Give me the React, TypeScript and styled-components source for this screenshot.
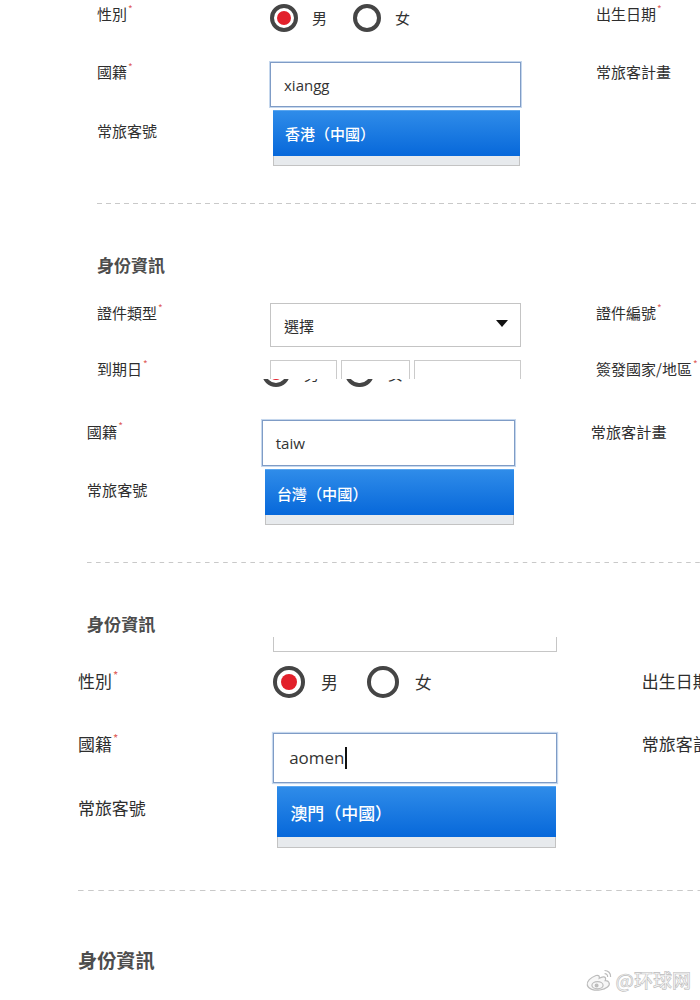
import React from "react";
import styled, { createGlobalStyle } from "styled-components";

const CJK = `"Noto Sans CJK TC", "Noto Sans CJK SC", "Noto Sans", sans-serif`;

const GlobalStyle = createGlobalStyle`
  html, body { margin: 0; padding: 0; background: #ffffff; }
  body { width: 700px; height: 1000px; overflow: hidden; font-family: ${CJK}; }
`;

const Page = styled.main`
  position: relative;
  width: 700px;
  height: 1000px;
  display: flex;
  flex-direction: column;
  overflow: hidden;
  background: #ffffff;
`;

const Shot = styled.section<{ $h: number }>`
  flex: none;
  height: ${(p) => p.$h}px;
  overflow: hidden;
`;

const Form = styled.div<{ $zoom: number; $left: number; $shift: number }>`
  zoom: ${(p) => p.$zoom};
  width: 760px;
  padding-left: ${(p) => p.$left}px;
  margin-top: ${(p) => p.$shift}px;
  display: flex;
  flex-direction: column;
`;

const Row = styled.div<{ $h: number; $top?: number }>`
  display: grid;
  grid-template-columns: 173px 251px 75px 1fr;
  align-items: start;
  height: ${(p) => p.$h}px;
  margin-top: ${(p) => p.$top ?? 0}px;
`;

const Label = styled.div<{ $pad?: number }>`
  padding-top: ${(p) => p.$pad ?? 0}px;
  font-size: 15px;
  line-height: 20px;
  color: #2e2e2e;
  white-space: nowrap;
`;

const Star = styled.span`
  color: #e0605a;
  font-size: 10px;
  line-height: 10px;
  vertical-align: top;
  margin-left: 1px;
`;

const Field = styled.div`
  position: relative;
`;

const TextBox = styled.div<{ $h: number; $focus?: boolean }>`
  box-sizing: border-box;
  height: ${(p) => p.$h}px;
  padding: 0 13px;
  display: flex;
  align-items: center;
  background: #fff;
  border: 1px solid ${(p) => (p.$focus ? "#7f9cc6" : "#c6c6c6")};
  box-shadow: ${(p) => (p.$focus ? "0 0 0 1px rgba(150, 182, 222, 0.55)" : "none")};
  font-family: "Open Sans", "Noto Sans", ${CJK};
  font-size: 15px;
  color: #333;
`;

const Caret = styled.span`
  display: inline-block;
  width: 1px;
  height: 19px;
  margin-left: 1px;
  background: #111;
`;

const SelectBox = styled.div`
  box-sizing: border-box;
  height: 44px;
  padding: 0 12px 0 13px;
  display: flex;
  align-items: center;
  justify-content: space-between;
  border: 1px solid #c4c4c4;
  background: #fff;
  font-size: 15px;
  color: #2e2e2e;
`;

const Arrow = styled.span`
  width: 0;
  height: 0;
  margin-top: -3px;
  border-left: 6px solid transparent;
  border-right: 6px solid transparent;
  border-top: 7px solid #111;
`;

const Menu = styled.div`
  position: absolute;
  left: 3px;
  right: 1px;
  top: calc(100% + 3px);
  display: flex;
  flex-direction: column;
  z-index: 2;
`;

const Option = styled.div<{ $h: number }>`
  height: ${(p) => p.$h}px;
  padding-left: 12px;
  display: flex;
  align-items: center;
  background: linear-gradient(#2f8ce9, #0768da);
  border-top: 1px solid #5aa6ef;
  color: #fff;
  font-size: 15px;
  font-weight: 500;
`;

const MenuFoot = styled.div`
  height: 9px;
  background: #e7eaed;
  border: 1px solid #c3c3c3;
  border-top: none;
`;

const Radios = styled.div`
  display: flex;
  align-items: center;
  padding-top: 4px;
`;

const RadioMark = styled.span<{ $on?: boolean }>`
  box-sizing: border-box;
  width: 28px;
  height: 28px;
  border: 4px solid #454545;
  border-radius: 50%;
  display: flex;
  align-items: center;
  justify-content: center;
  &::after {
    content: "";
    width: 14px;
    height: 14px;
    border-radius: 50%;
    background: ${(p) => (p.$on ? "#e2202b" : "transparent")};
  }
`;

const RadioText = styled.span`
  margin: 0 26px 0 14px;
  font-size: 15px;
  line-height: 20px;
  color: #333;
`;

const Dates = styled.div`
  display: grid;
  grid-template-columns: 67px 69px 1fr;
  column-gap: 4px;
  margin-top: 1px;
`;

const DateBox = styled.div`
  height: 40px;
  border: 1px solid #cbcbcb;
  background: #fff;
`;

const Divider = styled.div`
  margin-top: 24px;
  height: 1px;
  margin-right: -120px;
  background-image: linear-gradient(to right, #c9c9c9 55%, transparent 55%);
  background-size: 9px 1px;
`;

const Title = styled.h3<{ $gap: number }>`
  margin: ${(p) => p.$gap}px 0 0;
  height: 24px;
  font-size: 17px;
  line-height: 24px;
  font-weight: 700;
  color: #4d4d4d;
`;

const Watermark = styled.div`
  position: absolute;
  right: 9px;
  bottom: 7px;
  display: flex;
  align-items: center;
  gap: 3px;
  font-family: "Noto Sans CJK SC", sans-serif;
  font-size: 19px;
  font-weight: 500;
  color: #f7f7f7;
  -webkit-text-stroke: 0.6px #bcbcbc;
`;

const Req = () => <Star>*</Star>;

const Gender = () => (
  <Radios>
    <RadioMark $on />
    <RadioText>男</RadioText>
    <RadioMark />
    <RadioText>女</RadioText>
  </Radios>
);

const Combo = ({ value, option, inputH, optH, caret }: { value: string; option: string; inputH: number; optH: number; caret?: boolean }) => (
  <Field>
    <TextBox $h={inputH} $focus>
      {value}
      {caret && <Caret />}
    </TextBox>
    <Menu>
      <Option $h={optH}>{option}</Option>
      <MenuFoot />
    </Menu>
  </Field>
);

const WeiboLogo = () => (
  <svg width="28" height="24" viewBox="0 0 28 24" fill="none" stroke="#bcbcbc" strokeWidth="1.2">
    <path d="M11 7.5C5.5 9.5 1.5 13.5 2.3 17.2 3.2 21 9 22.8 15 22 21.5 21.2 25.5 17.5 24 14.5 23.2 12.8 21.5 12.5 20.2 12.6 21.2 10.6 20.5 8.6 18.2 8.8 16.6 9 14.2 10.3 14.2 10.3 14.8 8 13.5 6.8 11 7.5Z" fill="#f7f7f7" />
    <ellipse cx="12.5" cy="17.2" rx="5.6" ry="3.6" />
    <circle cx="11.6" cy="17.6" r="1.4" fill="#bcbcbc" />
    <path d="M19.5 2.5C23 2.4 26 5.2 25.6 9" />
    <path d="M19.6 5.6C21.6 5.6 22.8 7 22.6 9" />
  </svg>
);

export default function App() {
  return (
    <Page>
      <GlobalStyle />

      <Shot $h={379}>
        <Form $zoom={1} $left={97} $shift={0}>
          <Row $h={62}>
            <Label $pad={4}>性別<Req /></Label>
            <Gender />
            <span />
            <Label $pad={4}>出生日期<Req /></Label>
          </Row>
          <Row $h={59}>
            <Label>國籍<Req /></Label>
            <Combo value="xiangg" option="香港（中國）" inputH={45} optH={45} />
            <span />
            <Label>常旅客計畫</Label>
          </Row>
          <Row $h={58}>
            <Label>常旅客號</Label>
          </Row>
          <Divider />
          <Title $gap={49}>身份資訊</Title>
          <Row $h={56} $top={26}>
            <Label>證件類型<Req /></Label>
            <SelectBox>
              選擇
              <Arrow />
            </SelectBox>
            <span />
            <Label>證件編號<Req /></Label>
          </Row>
          <Row $h={60}>
            <Label>到期日<Req /></Label>
            <Dates>
              <DateBox />
              <DateBox />
              <DateBox />
            </Dates>
            <span />
            <Label>簽發國家/地區<Req /></Label>
          </Row>
        </Form>
      </Shot>

      <Shot $h={258}>
        <Form $zoom={1.01} $left={86} $shift={-24}>
          <Row $h={65}>
            <span />
            <Gender />
          </Row>
          <Row $h={58}>
            <Label $pad={1}>國籍<Req /></Label>
            <Combo value="taiw" option="台灣（中國）" inputH={45} optH={45} />
            <span />
            <Label $pad={1}>常旅客計畫</Label>
          </Row>
          <Row $h={58}>
            <Label>常旅客號</Label>
          </Row>
          <Divider />
          <Title $gap={49}>身份資訊</Title>
        </Form>
      </Shot>

      <Shot $h={363}>
        <Form $zoom={1.13} $left={69} $shift={-31}>
          <Row $h={53}>
            <span />
            <TextBox $h={44} />
          </Row>
          <Row $h={63}>
            <Label $pad={7}>性別<Req /></Label>
            <Gender />
            <span />
            <Label $pad={7}>出生日期<Req /></Label>
          </Row>
          <Row $h={57}>
            <Label>國籍<Req /></Label>
            <Combo value="aomen" option="澳門（中國）" inputH={44} optH={44} caret />
            <span />
            <Label>常旅客計畫</Label>
          </Row>
          <Row $h={58}>
            <Label>常旅客號</Label>
          </Row>
          <Divider />
          <Title $gap={49}>身份資訊</Title>
        </Form>
      </Shot>

      <Watermark>
        <WeiboLogo />
        <span>@环球网</span>
      </Watermark>
    </Page>
  );
}
